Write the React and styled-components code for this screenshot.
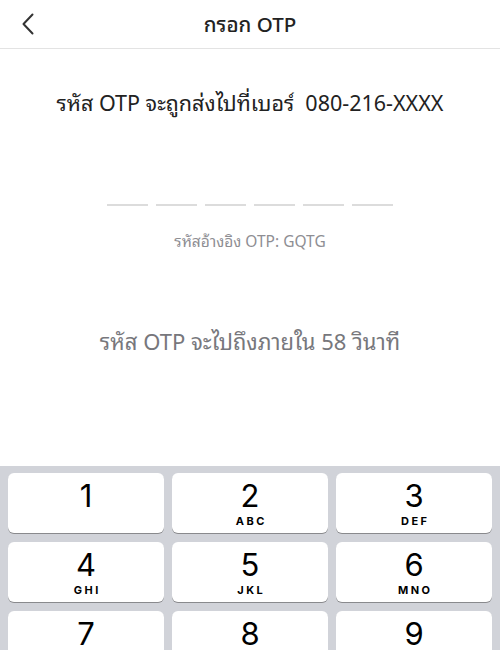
import React from "react";
import styled, { createGlobalStyle } from "styled-components";

const Global = createGlobalStyle`
  html, body { margin: 0; padding: 0; background: #fff; }
  body { font-family: "Noto Sans Thai Looped", "Loma", "Garuda", "Noto Sans Thai", "Noto Sans", "Roboto", sans-serif; }
  * { box-sizing: border-box; }
`;

const Page = styled.div`
  width: 500px;
  height: 650px;
  display: flex;
  flex-direction: column;
  overflow: hidden;
  background: #fff;
`;

const Header = styled.div`
  height: 49px;
  flex-shrink: 0;
  display: grid;
  grid-template-columns: 60px 1fr 60px;
  align-items: center;
  border-bottom: 1px solid #e3e3e3;
`;

const BackButton = styled.button`
  border: none;
  background: none;
  padding: 0 0 0 21px;
  height: 100%;
  display: flex;
  align-items: center;
  cursor: pointer;
`;

const Title = styled.div`
  text-align: center;
  font-size: 20.5px;
  font-weight: 500;
  color: #222;
  padding-bottom: 4px;
`;

const Body = styled.div`
  flex: 1;
  display: flex;
  flex-direction: column;
  align-items: center;
`;

const SentText = styled.div`
  margin-top: 39px;
  font-size: 21.5px;
  color: #222;
  line-height: 28px;
  white-space: pre;
`;

const Slots = styled.div`
  margin-top: 88px;
  display: flex;
  gap: 8px;
`;

const Slot = styled.div`
  width: 41px;
  height: 2px;
  background: #dcdcdc;
`;

const RefText = styled.div`
  margin-top: 24px;
  font-size: 15.5px;
  color: #8e8e93;
  line-height: 20px;
`;

const Countdown = styled.div`
  margin-top: 76px;
  font-size: 22px;
  color: #77777c;
  line-height: 28px;
`;

const Keyboard = styled.div`
  height: 184px;
  flex-shrink: 0;
  background: #d1d3d9;
  padding: 7px 8px 0;
  display: grid;
  grid-template-columns: repeat(3, 1fr);
  grid-auto-rows: 60px;
  gap: 9px 8px;
`;

const Key = styled.div`
  background: #fff;
  border-radius: 6px;
  box-shadow: 0 1px 0 #898a8d;
  display: flex;
  flex-direction: column;
  align-items: center;
  padding-top: 4px;
  font-family: "Inter", "Roboto", sans-serif;
  color: #000;
`;

const Digit = styled.div`
  font-size: 31px;
  line-height: 38px;
  font-weight: 400;
`;

const Letters = styled.div`
  font-size: 11px;
  font-weight: 700;
  letter-spacing: 2.5px;
  line-height: 12px;
  margin-left: 2.5px;
`;

const keys = [
  ["1", ""],
  ["2", "ABC"],
  ["3", "DEF"],
  ["4", "GHI"],
  ["5", "JKL"],
  ["6", "MNO"],
  ["7", "PQRS"],
  ["8", "TUV"],
  ["9", "WXYZ"],
];

export default function App() {
  return (
    <Page>
      <Global />
      <Header>
        <BackButton aria-label="back">
          <svg width="14" height="22" viewBox="0 0 14 22" fill="none">
            <path d="M11.5 1.5 L2.5 11 L11.5 20.5" stroke="#333" strokeWidth="2" strokeLinecap="round" strokeLinejoin="round" />
          </svg>
        </BackButton>
        <Title>กรอก OTP</Title>
        <div />
      </Header>
      <Body>
        <SentText>{"รหัส OTP จะถูกส่งไปที่เบอร์  080-216-XXXX"}</SentText>
        <Slots>
          {Array.from({ length: 6 }).map((_, i) => (
            <Slot key={i} />
          ))}
        </Slots>
        <RefText>รหัสอ้างอิง OTP: GQTG</RefText>
        <Countdown>รหัส OTP จะไปถึงภายใน 58 วินาที</Countdown>
      </Body>
      <Keyboard>
        {keys.map(([d, l]) => (
          <Key key={d}>
            <Digit>{d}</Digit>
            {l && <Letters>{l}</Letters>}
          </Key>
        ))}
      </Keyboard>
    </Page>
  );
}
